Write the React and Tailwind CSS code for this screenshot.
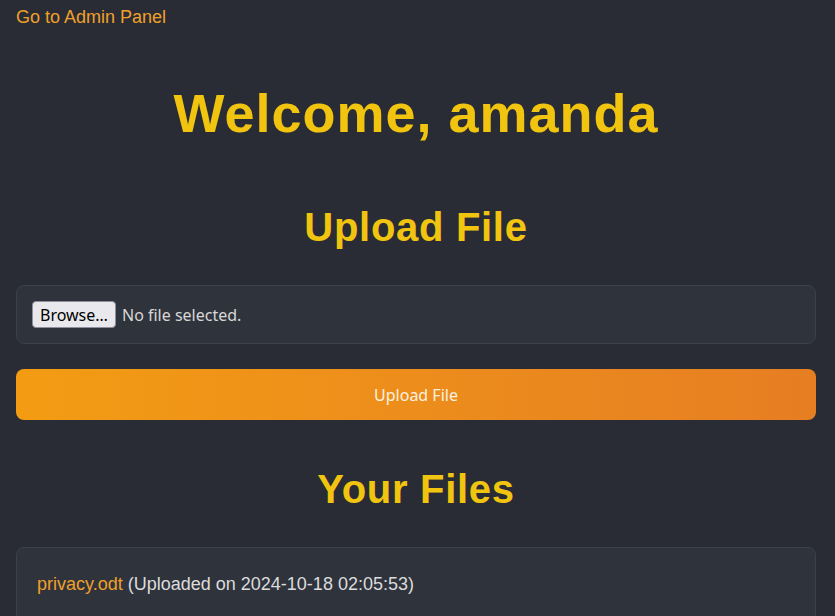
import React from "react";

const files = [{ name: "privacy.odt", uploaded: "2024-10-18 02:05:53" }];

export default function App() {
  return (
    <div className="min-h-screen w-full bg-[#292c35] font-['Liberation_Sans',Arial,sans-serif] px-4 pt-[7px]">
      <a href="#" className="block text-[18px] text-[#f0a02a] leading-[20px]">
        Go to Admin Panel
      </a>

      <div className="w-[800px]">
        <h1 className="mt-[57px] text-center text-[54px] font-bold tracking-[1px] text-[#f1c40f] leading-[58px]">
          Welcome, amanda
        </h1>

        <h2 className="mt-[62px] text-center text-[40px] font-bold tracking-[0.7px] text-[#f1c40f] leading-[46px]">
          Upload File
        </h2>

        <div className="mt-[35px] h-[59px] rounded-lg border border-[#3c404a] bg-[#2f333c] flex items-center pl-[15px] pr-4">
          <button className="h-[27px] px-[7px] rounded-[4px] border border-[#8f8f9d] bg-[#e9e9ed] text-[16px] text-black font-['Noto_Sans',sans-serif]">
            Browse…
          </button>
          <span className="ml-[6px] text-[16px] text-[#d8d8d8] font-['Noto_Sans',sans-serif]">
            No file selected.
          </span>
        </div>

        <button className="mt-[25px] w-full h-[51px] rounded-lg bg-gradient-to-r from-[#f39c12] to-[#e67e22] text-[16px] text-[#fdf2e0] font-['Noto_Sans',sans-serif]">
          Upload File
        </button>

        <h2 className="mt-[46px] text-center text-[40px] font-bold tracking-[0.7px] text-[#f1c40f] leading-[46px]">
          Your Files
        </h2>

        <div className="mt-[35px] rounded-lg border border-[#3c404a] bg-[#2f333c] px-5 py-[22px] pb-[40px]">
          {files.map((f) => (
            <div key={f.name} className="text-[18px] leading-[28px] text-[#dcdcdc]">
              <a href="#" className="text-[#f0a02a]">
                {f.name}
              </a>{" "}
              (Uploaded on {f.uploaded})
            </div>
          ))}
        </div>
      </div>
    </div>
  );
}
